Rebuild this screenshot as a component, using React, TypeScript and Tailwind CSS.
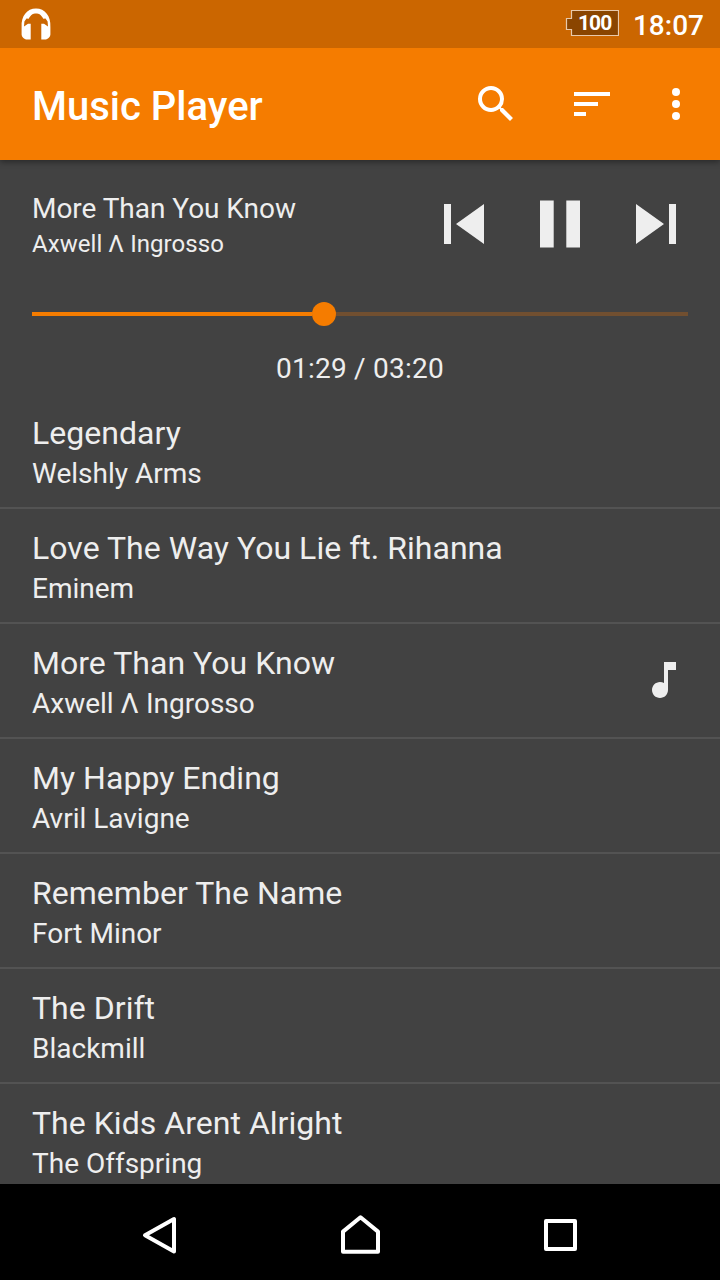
import React from "react";

const songs = [
  { title: "Legendary", artist: "Welshly Arms" },
  { title: "Love The Way You Lie ft. Rihanna", artist: "Eminem" },
  { title: "More Than You Know", artist: "Axwell Λ Ingrosso", playing: true },
  { title: "My Happy Ending", artist: "Avril Lavigne" },
  { title: "Remember The Name", artist: "Fort Minor" },
  { title: "The Drift", artist: "Blackmill" },
  { title: "The Kids Arent Alright", artist: "The Offspring" },
];

function StatusBar() {
  return (
    <div className="z-20 flex h-12 shrink-0 items-center bg-[#cb6600] pl-5 pr-4 text-white">
      <svg className="h-8 w-8" viewBox="0 0 32 32" fill="#fff">
        <path d="M1.6 19C1 8 7 0.5 16 0.5S31 8 30.4 19L30.4 26.5C30 30 27 31.5 25 31.5H21.3V15.7H24L28 18.5 27.6 13.5 25.5 10.5 23.3 10.8C21 6.5 19 5.5 16 5.5S11 6.5 8.7 10.8L6.5 10.5 4.4 13.5 4 18.5 8 15.7H10.7V31.5H7C5 31.5 2 30 1.6 26.5Z" />
      </svg>
      <div className="ml-auto flex items-center">
        <div className="relative mt-[-2px] h-[27px] w-[54px]">
          <svg className="absolute inset-0" width="54" height="27" viewBox="0 0 54 27">
            <path d="M6.5 0.5H53.5V25.5H6.5V19.5H1.5V8.5H6.5Z" fill="#8a4500" stroke="#e8c9ab" strokeWidth="1.2" />
          </svg>
          <span className="absolute left-[13px] top-[2px] text-[21px] leading-[23px] font-bold tracking-[-0.9px]">100</span>
        </div>
        <span className="ml-[14px] mt-[3px] text-[28px] leading-8 font-medium">18:07</span>
      </div>
    </div>
  );
}

function Toolbar() {
  return (
    <header className="z-10 flex h-28 shrink-0 items-center bg-[#f57c00] pl-8 pr-5 text-white shadow-[0_2px_6px_rgba(0,0,0,0.4)]">
      <h1 className="mt-[6px] grow text-[40px] leading-[48px] font-medium">Music Player</h1>
      <svg className="mr-12 h-12 w-12" viewBox="0 0 24 24" fill="#fff">
        <path d="M15.5 14h-.79l-.28-.27A6.47 6.47 0 0 0 16 9.5 6.5 6.5 0 1 0 9.5 16c1.61 0 3.09-.59 4.23-1.57l.27.28v.79l5 4.99L20.49 19l-4.99-5zm-6 0C7.01 14 5 11.99 5 9.5S7.01 5 9.5 5 14 7.01 14 9.5 11.99 14 9.5 14z" />
      </svg>
      <svg className="mr-9 h-12 w-12" viewBox="0 0 24 24" fill="#fff">
        <path d="M3 18h6v-2H3v2zM3 6v2h18V6H3zm0 7h12v-2H3v2z" />
      </svg>
      <svg className="h-12 w-12" viewBox="0 0 24 24" fill="#fff">
        <circle cx="12" cy="6" r="2" />
        <circle cx="12" cy="12" r="2" />
        <circle cx="12" cy="18" r="2" />
      </svg>
    </header>
  );
}

function Player() {
  return (
    <section className="h-[234px] shrink-0 px-8 pt-8">
      <div className="flex h-16">
        <div className="grow">
          <div className="text-[28px] leading-[33px] tracking-[-0.04px]">More Than You Know</div>
          <div className="mt-[5px] text-[24px] leading-[28px] tracking-[0.06px]">Axwell Λ Ingrosso</div>
        </div>
        <svg className="mr-3" width="232" height="64" viewBox="0 0 232 64" fill="#eee">
          <path d="M0 12H7V52H0ZM40 12V52L12 32Z" />
          <path d="M96 8.5H109.7V55.5H96ZM122.3 8.5H136V55.5H122.3Z" />
          <path d="M192 12V52L220 32ZM225 12H232V52H225Z" />
        </svg>
      </div>
      <div className="mt-[46px] flex h-6 items-center">
        <div className="h-1 w-[280px] bg-[#f57c00]" />
        <div className="h-6 w-6 rounded-full bg-[#f57c00]" />
        <div className="h-1 grow bg-[#714f30]" />
      </div>
      <div className="mt-[26px] text-center text-[28px] leading-[33px] tracking-[0.22px]">01:29 / 03:20</div>
    </section>
  );
}

function NavBar() {
  return (
    <nav className="flex h-24 shrink-0 items-center justify-center bg-black">
      <svg width="440" height="48" viewBox="0 0 440 48" fill="none" stroke="#fff" strokeWidth="4" strokeLinejoin="round">
        <path d="M34 11V43.5L5 27.2Z" />
        <path d="M203 43.8H238V23.6L220.5 9.3L203 23.6Z" />
        <path d="M406 13H435V41H406Z" />
      </svg>
    </nav>
  );
}

export default function App() {
  return (
    <div className="flex h-[1280px] w-[720px] flex-col overflow-hidden bg-[#424242] font-['Roboto',sans-serif] text-[#eeeeee]">
      <StatusBar />
      <Toolbar />
      <Player />
      <main className="min-h-0 grow overflow-hidden">
        {songs.map((song) => (
          <div key={song.title} className="flex h-[115px] items-start border-b-2 border-[#535353] px-8 pt-5">
            <div className="grow">
              <div className="text-[32px] leading-[38px] tracking-[0.03px]">{song.title}</div>
              <div className="mt-[5px] text-[28px] leading-[33px]">{song.artist}</div>
            </div>
            {song.playing && (
              <svg className="mt-3 h-12 w-12" viewBox="0 0 24 24" fill="#eee">
                <path d="M12 3v10.55c-.59-.34-1.27-.55-2-.55-2.21 0-4 1.79-4 4s1.79 4 4 4 4-1.79 4-4V7h4V3h-6z" />
              </svg>
            )}
          </div>
        ))}
      </main>
      <NavBar />
    </div>
  );
}
